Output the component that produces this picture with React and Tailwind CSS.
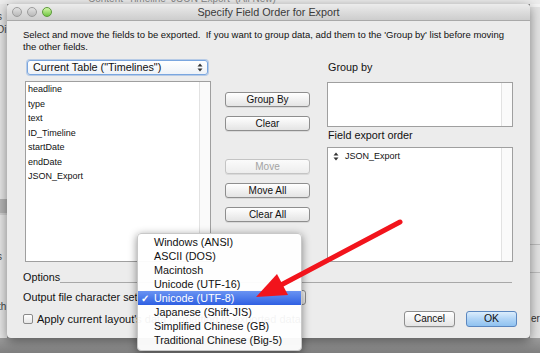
import React from "react";

const fields = ["headline", "type", "text", "ID_Timeline", "startDate", "endDate", "JSON_Export"];

const charsets = [
    "Windows (ANSI)",
    "ASCII (DOS)",
    "Macintosh",
    "Unicode (UTF-16)",
    "Unicode (UTF-8)",
    "Japanese (Shift-JIS)",
    "Simplified Chinese (GB)",
    "Traditional Chinese (Big-5)",
];

const UpDown = ({ className = "" }) => (
    <svg width="6" height="9" viewBox="0 0 6 9" className={className}>
        <path d="M3 0.5 L5.5 3.5 L0.5 3.5 Z" fill="#333" />
        <path d="M3 8.5 L5.5 5.5 L0.5 5.5 Z" fill="#333" />
    </svg>
);

const Button = ({ children, disabled, className = "" }) => (
    <div
        className={`h-[15px] flex items-center justify-center rounded-[3px] border text-[10px] leading-none bg-gradient-to-b shadow-[0_1px_0_rgba(0,0,0,0.08)] ${
            disabled
                ? "border-[#c4c4c4] from-[#fbfbfb] to-[#ededed] text-[#a3a3a3]"
                : "border-[#8e8e8e] from-[#ffffff] to-[#e4e4e4] text-[#111]"
        } ${className}`}
    >
        {children}
    </div>
);

const ListBox = ({ className = "", children }) => (
    <div className={`flex border border-[#9f9f9f] bg-white ${className}`}>
        <div className="flex-1 overflow-hidden">{children}</div>
        <div className="w-[11px] border-l border-[#e2e2e2] bg-[#fafafa]" />
    </div>
);

const Light = ({ green }) => (
    <div
        className={`w-[10px] h-[10px] rounded-full border bg-gradient-to-b ${
            green
                ? "border-[#5c9a3a] from-[#d4f7a8] to-[#6fc63f]"
                : "border-[#9c9c9c] from-[#e2e2e2] to-[#b9b9b9]"
        }`}
    />
);

export default function App() {
    return (
        <div className="relative w-[540px] h-[353px] overflow-hidden bg-[#8f8f8f] font-['Liberation_Sans',Arial,sans-serif] text-[#111]">
            <div className="flex flex-col h-full">
                {/* window behind, top edge */}
                <div className="h-[4px] bg-[#ececec] overflow-hidden">
                    <div className="-mt-[9px] ml-[88px] text-[10px] text-[#8a8a8a] whitespace-nowrap">
                        Content&nbsp; Timeline&nbsp; JSON Export&nbsp; (All New)
                    </div>
                </div>

                <div className="flex h-[334px]">
                    <div className="w-[7px] bg-[#e6e6e6] flex flex-col text-[10px] text-[#444] overflow-hidden leading-[13px]">
                        <div className="mt-[6px] -ml-[3px]">s</div>
                        <div className="-ml-[3px]">Di</div>
                        <div className="h-[14px] mt-[163px] bg-[#b5b5b5]" />
                        <div className="h-[2px] bg-[#d0d0d0]" />
                        <div className="mt-[35px] -ml-[3px]">s</div>
                        <div className="mt-[37px] -ml-[2px]">th</div>
                    </div>

                    {/* dialog window */}
                    <div className="relative z-10 w-[523px] h-[334px] flex flex-col bg-[#ececec] rounded-[4px] shadow-[0_3px_12px_rgba(0,0,0,0.45)]">
                        <div className="relative h-[17px] flex items-center rounded-t-[4px] border-b border-[#a9a9a9] bg-gradient-to-b from-[#ececec] to-[#cdcdcd]">
                            <div className="flex gap-[5px] ml-[5px]">
                                <Light />
                                <Light />
                                <Light green />
                            </div>
                            <div className="absolute inset-0 flex items-center justify-center text-[10.8px] text-[#3a3a3a]">
                                Specify Field Order for Export
                            </div>
                        </div>

                        <div className="ml-[16px] mt-[8px] text-[9.5px] leading-[12px]">
                            <div>Select and move the fields to be exported.&nbsp; If you want to group data, add them to the 'Group by' list before moving</div>
                            <div>the other fields.</div>
                        </div>

                        <div className="flex mt-[7px] ml-[18px]">
                            {/* left */}
                            <div className="w-[186px] flex flex-col">
                                <div className="ml-[2px] w-[181px] h-[15px] flex items-center rounded-[3px] border border-[#7aa6df] bg-gradient-to-b from-white to-[#eef2f7] shadow-[0_0_0_1px_rgba(120,165,225,0.45)]">
                                    <span className="ml-[5px] flex-1 text-[10.8px] leading-none">Current Table ("Timelines")</span>
                                    <UpDown className="mr-[4px]" />
                                </div>
                                <ListBox className="mt-[6px] h-[181px]">
                                    <div className="flex flex-col">
                                        {fields.map((f) => (
                                            <div key={f} className="pl-[2px] text-[9px] leading-[14.5px]">
                                                {f}
                                            </div>
                                        ))}
                                    </div>
                                </ListBox>
                            </div>

                            {/* middle */}
                            <div className="ml-[14px] w-[85px] flex flex-col">
                                <Button className="mt-[32px]">Group By</Button>
                                <Button className="mt-[9px]">Clear</Button>
                                <Button disabled className="mt-[28px]">Move</Button>
                                <Button className="mt-[9px]">Move All</Button>
                                <Button className="mt-[9px]">Clear All</Button>
                            </div>

                            {/* right */}
                            <div className="ml-[17px] w-[186px] flex flex-col">
                                <div className="mt-[1px] h-[13px] leading-[13px] text-[10.8px] ml-[1px]">Group by</div>
                                <ListBox className="mt-[8px] h-[45px]" />
                                <div className="mt-[2px] h-[13px] leading-[13px] text-[10.8px] ml-[1px]">Field export order</div>
                                <ListBox className="mt-[5px] h-[115px]">
                                    <div className="flex items-center mt-[2px] ml-[5px]">
                                        <UpDown />
                                        <span className="ml-[6px] text-[9px] leading-[12px]">JSON_Export</span>
                                    </div>
                                </ListBox>
                            </div>
                        </div>

                        {/* options */}
                        <div className="flex mt-[9px] ml-[16px] mr-[18px] h-[13px]">
                            <span className="text-[10.8px] leading-[13px]">Options</span>
                            <div className="flex-1 h-px self-end mb-[1px] bg-[#a8a8a8]" />
                        </div>

                        <div className="flex items-center mt-[6px] ml-[16px] h-[15px]">
                            <span className="w-[120px] text-[10.8px] whitespace-nowrap">Output file character set:</span>
                            <div className="w-[163px] h-[15px] rounded-[3px] border border-[#8e8e8e] bg-gradient-to-b from-white to-[#e2e2e2] flex items-center">
                                <span className="ml-[12px] flex-1 text-[10.8px]">Unicode (UTF-8)</span>
                                <UpDown className="mr-[4px]" />
                            </div>
                        </div>

                        <div className="flex items-center mt-[6px] ml-[16px] mr-[13px] h-[16px]">
                            <div className="w-[10px] h-[10px] rounded-[2px] border border-[#8a8a8a] bg-gradient-to-b from-white to-[#e6e6e6]" />
                            <span className="ml-[4px] text-[11px] whitespace-nowrap">Apply current layout's data formatting to exported data</span>
                            <div className="flex-1" />
                            <Button className="w-[51px] h-[16px] text-[10.5px]">Cancel</Button>
                            <div className="ml-[11px] w-[51px] h-[16px] flex items-center justify-center rounded-[3px] border border-[#5b87c0] bg-gradient-to-b from-[#dcedfc] via-[#b0d4f6] to-[#8fc2f0] text-[10.5px]">
                                OK
                            </div>
                        </div>
                    </div>

                    <div className="flex-1 bg-[#e3e3e3] flex flex-col text-[10px] text-[#333] overflow-hidden">
                        <div className="h-[3px] bg-[#f4f4f4]" />
                        <div className="h-px mt-[237px] bg-[#bdbdbd]" />
                        <div className="h-px mt-[27px] bg-[#bdbdbd]" />
                        <div className="mt-[40px] ml-[1px] leading-[12px]">er</div>
                    </div>
                </div>

                <div className="flex-1 bg-gradient-to-b from-[#9d9d9d] to-[#7f7f7f]" />
            </div>

            {/* charset popup menu */}
            <div className="absolute left-[137px] top-[233px] w-[165px] h-[118px] z-20 bg-white/[0.95] rounded-[4px] shadow-[0_2px_8px_rgba(0,0,0,0.45)] border border-[#c8c8c8] py-[1px]">
                {charsets.map((c) => {
                    const sel = c === "Unicode (UTF-8)";
                    return (
                        <div
                            key={c}
                            className={`relative h-[14px] flex items-center text-[10.8px] ${
                                sel ? "bg-gradient-to-b from-[#6a93f2] to-[#2f5fe2] text-white" : ""
                            }`}
                        >
                            {sel && <span className="absolute left-[3px] text-[10px] font-bold">✓</span>}
                            <span className="ml-[16px] whitespace-nowrap">{c}</span>
                        </div>
                    );
                })}
            </div>

            {/* red annotation arrow */}
            <svg className="absolute left-0 top-0 z-30 pointer-events-none" width="540" height="353" viewBox="0 0 540 353">
                <line x1="400" y1="222" x2="281" y2="285" stroke="#f2141c" strokeWidth="5" strokeLinecap="round" />
                <polygon points="256,297 277,274 288,295" fill="#f2141c" />
            </svg>
        </div>
    );
}
